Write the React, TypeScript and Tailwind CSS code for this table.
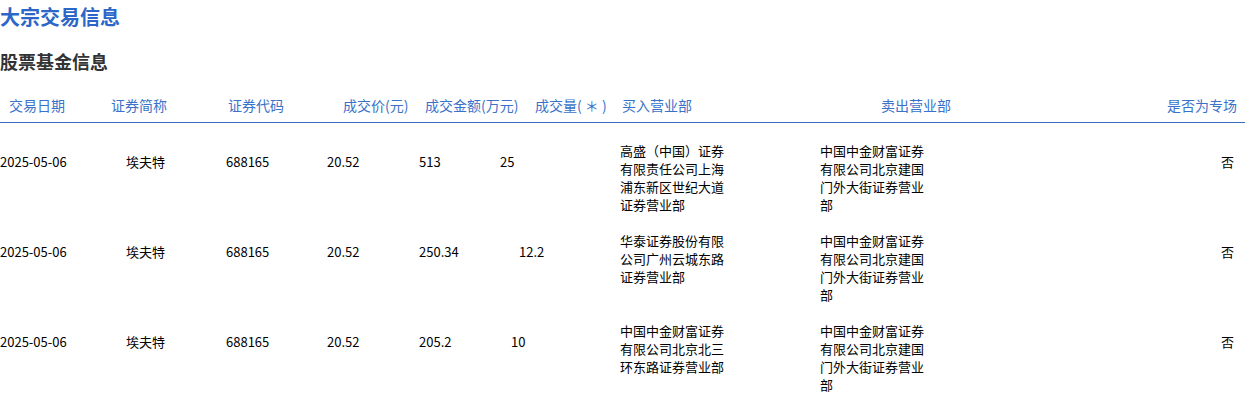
import React from "react";

type Row = {
  date: string;
  name: string;
  code: string;
  price: string;
  amount: string;
  amountW: string;
  vol: string;
  volW: string;
  buy: string;
  sell: string;
  special: string;
};

const rows: Row[] = [
  {
    date: "2025-05-06",
    name: "埃夫特",
    code: "688165",
    price: "20.52",
    amount: "513",
    amountW: "w-[81px]",
    vol: "25",
    volW: "w-[120px]",
    buy: "高盛（中国）证券有限责任公司上海浦东新区世纪大道证券营业部",
    sell: "中国中金财富证券有限公司北京建国门外大街证券营业部",
    special: "否",
  },
  {
    date: "2025-05-06",
    name: "埃夫特",
    code: "688165",
    price: "20.52",
    amount: "250.34",
    amountW: "w-[100px]",
    vol: "12.2",
    volW: "w-[101px]",
    buy: "华泰证券股份有限公司广州云城东路证券营业部",
    sell: "中国中金财富证券有限公司北京建国门外大街证券营业部",
    special: "否",
  },
  {
    date: "2025-05-06",
    name: "埃夫特",
    code: "688165",
    price: "20.52",
    amount: "205.2",
    amountW: "w-[92px]",
    vol: "10",
    volW: "w-[109px]",
    buy: "中国中金财富证券有限公司北京北三环东路证券营业部",
    sell: "中国中金财富证券有限公司北京建国门外大街证券营业部",
    special: "否",
  },
];

export default function App() {
  return (
    <div
      className="w-[1245px] h-[394px] overflow-hidden bg-white text-black"
      style={{ fontFamily: '"Noto Sans CJK SC", "Noto Sans", sans-serif' }}
    >
      <div className="h-[34px] flex items-center text-[20px] font-bold text-[#2b66c8]">
        大宗交易信息
      </div>
      <div className="mt-[10px] h-[34px] flex items-center text-[18px] font-bold text-[#333333]">
        股票基金信息
      </div>
      <div className="mt-[11px] h-[34px] flex items-center pl-[9px] text-[14px] text-[#3a72c9] border-b border-[#3a6cc0]">
        <div className="w-[102px] shrink-0">交易日期</div>
        <div className="w-[117px] shrink-0">证券简称</div>
        <div className="w-[115px] shrink-0">证券代码</div>
        <div className="w-[82px] shrink-0">成交价(元)</div>
        <div className="w-[110px] shrink-0">成交金额(万元)</div>
        <div className="w-[87px] shrink-0">成交量( ＊ )</div>
        <div className="w-[259px] shrink-0">买入营业部</div>
        <div className="w-[200px] shrink-0">卖出营业部</div>
        <div className="flex-1 text-right pr-[8px]">是否为专场</div>
      </div>
      <div className="mt-[10px]">
        {rows.map((r, i) => (
          <div key={i} className="h-[90px] flex items-start text-[13px] leading-[18px]">
            <div className="w-[126px] shrink-0 mt-[20px]">{r.date}</div>
            <div className="w-[100px] shrink-0 mt-[20px]">{r.name}</div>
            <div className="w-[101px] shrink-0 mt-[20px]">{r.code}</div>
            <div className="w-[92px] shrink-0 mt-[20px]">{r.price}</div>
            <div className={`${r.amountW} shrink-0 mt-[20px]`}>{r.amount}</div>
            <div className={`${r.volW} shrink-0 mt-[20px]`}>{r.vol}</div>
            <div className="w-[200px] shrink-0 mt-[9px]">
              <div className="w-[108px]">{r.buy}</div>
            </div>
            <div className="w-[108px] shrink-0 mt-[9px]">{r.sell}</div>
            <div className="flex-1 text-right pr-[11px] mt-[20px]">{r.special}</div>
          </div>
        ))}
      </div>
    </div>
  );
}
